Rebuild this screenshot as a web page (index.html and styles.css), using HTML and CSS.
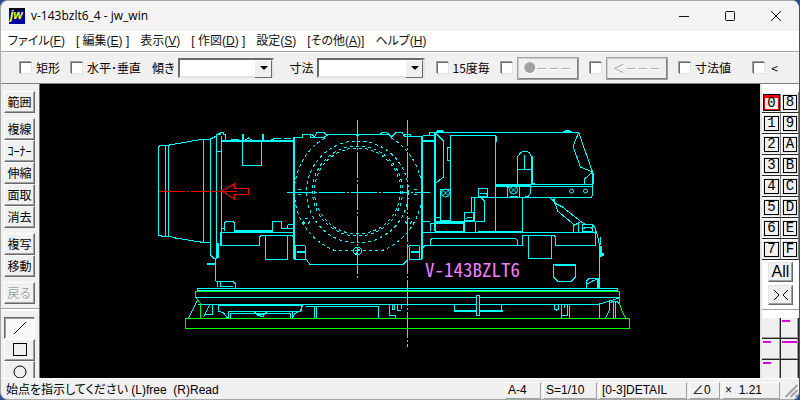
FILE: index.html
```html
<!DOCTYPE html>
<html lang="ja">
<head>
<meta charset="utf-8">
<title>v-143bzlt6_4 - jw_win</title>
<link rel="stylesheet" href="styles.css">
</head>
<body>
<div class="window">
<header class="titlebar">
  <svg class="app-icon" viewBox="0 0 16 16" aria-hidden="true"><rect width="16" height="16" fill="#0000a0"/><path d="M0 0H16V2H0zM6 2h2v2H6zM14 2h2v2h-2z" fill="#000"/><text x="1" y="11" class="app-letters">jw</text></svg>
  <h1 class="title">v-143bzlt6_4 - jw_win</h1>
  <div class="window-buttons">
    <button aria-label="最小化"><svg viewBox="0 0 12 12"><path d="M1 6.500H11"/></svg></button>
    <button aria-label="最大化"><svg viewBox="0 0 12 12"><rect x="1.500" y="1.500" width="9" height="9" rx="1"/></svg></button>
    <button aria-label="閉じる"><svg viewBox="0 0 12 12"><path d="M1 1L11 11M11 1L1 11"/></svg></button>
  </div>
</header>
<nav class="menubar">
  <a href="#">ファイル(<u>F</u>)</a>
  <a href="#">[ 編集(<u>E</u>) ]</a>
  <a href="#">表示(<u>V</u>)</a>
  <a href="#">[ 作図(<u>D</u>) ]</a>
  <a href="#">設定(<u>S</u>)</a>
  <a href="#">[その他(<u>A</u>)]</a>
  <a href="#">ヘルプ(<u>H</u>)</a>
</nav>
<form class="options">
  <label class="check"><input type="checkbox">矩形</label>
  <label class="check"><input type="checkbox">水平･垂直</label>
  <label class="combo">傾き<span class="drop"><select><option></option></select></span></label>
  <label class="combo wide">寸法<span class="drop"><select><option></option></select></span></label>
  <label class="check"><input type="checkbox">15度毎</label>
  <span class="pair"><input type="checkbox" aria-label="端点"><button type="button" disabled>●－－－</button></span>
  <span class="pair"><input type="checkbox" aria-label="矢印"><button type="button" disabled>＜－－－</button></span>
  <label class="check"><input type="checkbox">寸法値</label>
  <label class="check last"><input type="checkbox">&lt;</label>
</form>
<main class="work">
  <aside class="tools">
    <div class="tool-group"><button>範囲</button></div>
    <div class="tool-group"><button>複線</button><button>ｺｰﾅｰ</button><button>伸縮</button><button>面取</button><button>消去</button></div>
    <div class="tool-group"><button>複写</button><button>移動</button></div>
    <div class="tool-group"><button disabled>戻る</button></div>
    <div class="tool-group shapes">
      <button class="pressed" aria-label="線"><svg viewBox="0 0 16 16"><path d="M2 14L14 2"/></svg></button>
      <button aria-label="矩形"><svg viewBox="0 0 16 16"><rect x="1.500" y="1.500" width="13" height="12"/></svg></button>
      <button aria-label="円"><svg viewBox="0 0 16 16"><circle cx="8" cy="8" r="6"/></svg></button>
    </div>
  </aside>
  <svg class="drawing" viewBox="40 85 720 293" role="img" aria-label="V-143BZLT6">
    <g transform="translate(.5 .5)" class="line">
      <!-- lens barrel -->
      <path d="M158 235V147L160 145H169L175 144L203 139H210L216 136M158 235L161 236H168L175 238L200 242H210M165 145V236M168 145V236M203 139V242M210 139V255L213 258H216M216 136V258M221 136V232M216 151H221M216 136V134H220V132H223V134H225V141"/>
      <path class="thick" d="M217 134H220M217 243V258M220 232V246M206 264H215M221 141H292M242 134V141M262 134V141M233 231H272"/>
      <path d="M215 258V281M242 141V165H261V141M242 140H262M229 140H231L233 139H238M245 140L248 138L251 140M271 140L275 138H280M283 138H290M221 232H292"/>
      <path d="M221 228H224M224 231V223L226 221H232L234 223V231M272 231V222L273 221H280L281 222V228H292M286 229L288 224H292M219 245H259V237L261 235H291L293 237M265 236V259H287V236"/>
      <!-- centre body -->
      <path class="thick" d="M293 137V259M421 137V259M296 252H305M410 252H419M422 141H434M434 132V231"/>
      <path d="M293 137H302V134H310V137H314L316 133L318 132H323L325 134H348M311 134L314 137H324L327 135M348 134H388L391 137L395 133L397 132H401L404 136H422M404 136V134H410V137M380 134L382 132H385L388 134M354 134L357 136L360 134"/>
      <path d="M293 259H305M295 259V246L297 245H304L305 247V258L309 264H403L407 260V247L410 245H418L419 247V259H409V247M409 259H421"/>
      <path class="dash" d="M324 138A63 63 0 0 0 333 250H383A63 63 0 0 0 391 138"/>
      <circle class="dash" cx="357" cy="192" r="51"/><circle class="dash" cx="357" cy="191" r="45"/><circle class="dash" cx="357" cy="191" r="43"/>
      <circle cx="357" cy="251" r="4"/><circle class="dash" cx="306" cy="221" r="3"/><circle class="dash" cx="408" cy="221" r="3"/>
      <path d="M355 254L359 249M354 250H357M297 189H300M297 194H300M413 189H416M413 194H416"/>
      <path class="chain" d="M357 120V279M407 120V347M286 192H429"/>
      <path d="M422 135H434M429 135V132H433M422 221H429M430 223V231M429 223H434M421 232H595"/>
      <!-- prism housing -->
      <path d="M434 132H578L592 172V184M434 132L443 141V177L434 184M435 131H443M562 131H571M450 221V135H495V197M450 147H447V160H450M578 133L573 145V148L580 167L592 172L584 179V184M495 184H592V195L591 197H474M495 186H592M495 197V232H474"/>
      <path class="thick" d="M436 131H442M564 131H569M495 136V142M592 173V184M495 185H530"/>
      <path d="M517 184V157L520 153L523 151H526L529 153L531 157V184M524 155V169M517 169H531M532 156V183L534 184M507 197V188L509 186M519 186V197M530 186V193L528 196L525 197"/>
      <path d="M440 221V190L441 189H450M509 196H517M478 188H487V196H478ZM480 194L481 193H485L487 195M471 212V197H480L484 201V221H475M474 197V222M464 212H473V221H464ZM466 219L467 217H471M434 217H440V220H450M434 223H463V231H434M464 222V232M475 222V232M435 221H464"/>
      <g class="bolt"><circle cx="445" cy="193" r="4"/><circle cx="513" cy="190" r="4"/><path d="M442 190L448 196M448 190L442 196M510 187L516 193M516 187L510 193"/><circle cx="571" cy="191" r="2"/><circle cx="585" cy="191" r="2"/></g>
      <path class="thick" d="M464 221H474M463 223V231M477 232H522M434 222H463"/>
      <path d="M522 197V232M549 197L555 204L557 211L574 225M552 199L556 204L562 207L581 222M554 198V202M573 232V226L579 222M578 222V232M582 224H592V231H582ZM583 229L585 227H590L592 229M581 222L584 224H592L595 229V245M595 229L597 236L599 245V288M600 237V245"/>
      <path class="thick" d="M600 246V257M602 253V256"/>
      <path d="M422 248L425 245H522V236L524 235H553L555 237V245H595M430 245V240L432 238H515L517 241V245M528 235V258H551V235M553 264H575V277L571 281H557L553 277ZM554 265H574M586 288V281L589 278H598V288M587 284L592 281L597 279M597 278V288"/>
      <!-- base rails -->
      <path d="M215 281H232L235 284V288M217 281V287M220 281V286M219 286H232M197 290V288H617V290H196M195 297H619M197 304H599V318M197 300L188 318M209 305L203 317M204 314H212V304M218 304V311L223 313L227 318M228 311V318M230 313V318M228 311H300L302 305L305 304M301 310L294 314L292 318M230 313H290V318M292 311V318M254 312L257 315L260 316H263L266 312M257 314H264M305 306H378V318M314 306V318M316 306V318M389 304V315H395V318M392 304V309H394V304M397 304V310H400M401 304V309"/>
      <path class="thick" d="M218 305H302M454 311H502"/>
      <path d="M454 304V312M501 304V312M554 304V309L556 310L558 309V304M561 304V318M561 315H567V304M564 304V308M569 304V318M599 304L609 301L619 298M605 318L609 310V303L613 301H617M613 302V318M615 302V318M616 301L619 304L622 312"/>
    </g>
    <g transform="translate(.5 .5)" class="line green"><path d="M185 318H629V328H185ZM195 297V291H619V304L622 312L625 318M195 297L200 304V318"/></g>
    <g transform="translate(.5 .5)" class="line"><rect x="476" y="295" width="3" height="20" fill="#000"/></g>
    <g transform="translate(.5 .5)" class="line red"><path d="M221 191L234 184V188H248V194H234V199Z"/><path class="chain" d="M158 191H236"/></g>
    <text x="425" y="277" class="model">V-143BZLT6</text>
  </svg>
  <aside class="layers">
    <div class="layer-grid">
      <button class="current">0</button><button>8</button><button>1</button><button>9</button><button>2</button><button>A</button><button>3</button><button>B</button><button>4</button><button>C</button><button>5</button><button>D</button><button>6</button><button>E</button><button>7</button><button>F</button>
    </div>
    <div class="layer-actions">
      <button>All</button>
      <button aria-label="全レイヤ切替"><svg viewBox="0 0 16 12"><path d="M1 1L6 6L1 11M15 1L10 6L15 11"/></svg></button>
    </div>
    <div class="group-grid"><button aria-label="グループ 0"></button><button class="used" aria-label="グループ 8"></button><button class="used" aria-label="グループ 1"></button><button class="used full" aria-label="グループ 9"></button><button class="used" aria-label="グループ 2"></button><button aria-label="グループ A"></button></div>
  </aside>
</main>
<footer class="status">
  <span class="message">始点を指示してください (L)free&nbsp; (R)Read</span>
  <span class="panel paper">A-4</span>
  <span class="panel scale">S=1/10</span>
  <span class="panel layer">[0-3]DETAIL</span>
  <span class="panel angle">∠0</span>
  <span class="panel zoom">×&nbsp; 1.21</span>
  <svg class="grip" viewBox="0 0 16 16" aria-hidden="true"><path d="M3 15L15 3M8 15L15 8M13 15L15 13"/></svg>
</footer>
</div>
</body>
</html>
```
FILE: styles.css
```css
* { box-sizing: border-box; }
body { margin: 0; background: #2b4c92; }
button, input, select { font: inherit; color: inherit; margin: 0; padding: 0; }
.window {
  height: 100vh;
  display: flex;
  flex-direction: column;
  overflow: hidden;
  background: #f0f0f0;
  border: solid #a8a8a8;
  border-width: 1px 0 1px 1px;
  border-right: 1px solid #35518f;
  border-radius: 8px;
  color: #000;
  font: 12px/16px "Liberation Sans", "Noto Sans CJK JP", sans-serif;
}
.titlebar { display: flex; align-items: center; height: 30px; flex: none; padding-left: 8px; background: #f3f3f3; }
.app-icon { width: 16px; height: 16px; }
.app-letters { font: italic bold 12px "Liberation Sans", sans-serif; fill: #ff0; }
.title { flex: 1; margin: 0 0 0 6px; font: 12px/16px "Open Sans", sans-serif; }
.window-buttons { display: flex; }
.window-buttons button { width: 46px; height: 29px; border: 0; background: none; display: grid; place-items: center; }
.window-buttons svg { width: 12px; height: 12px; fill: none; stroke: #111; }
.menubar { display: flex; flex: none; gap: 11px; height: 21px; padding: 2px 7px; background: #fff; border-bottom: 1px solid #a0a0a0; white-space: nowrap; font-feature-settings: "palt"; }
.menubar a { color: #111; text-decoration: none; }
.options { display: flex; flex: none; align-items: center; height: 32px; padding-left: 19px; border-top: 1px solid #fff; border-bottom: 1px solid #808080; white-space: nowrap; font-family: "Noto Sans CJK JP", sans-serif; font-feature-settings: "palt"; }
.check, .combo, .pair { display: flex; align-items: center; flex: none; }
.check { gap: 4px; margin-right: 11px; }
.options input { appearance: none; width: 12px; height: 12px; background: #fff; border: 1px solid; border-color: #696969 #e3e3e3 #e3e3e3 #696969; box-shadow: -1px -1px 0 #a0a0a0; }
.combo { gap: 3px; margin-right: 16px; }
.combo.wide { margin-right: 12px; }
.drop { position: relative; width: 96px; height: 20px; }
.wide .drop { width: 108px; }
.drop select { appearance: none; display: block; width: 100%; height: 20px; background: #fff; border: 2px solid; border-color: #696969 #e3e3e3 #e3e3e3 #696969; border-radius: 0; }
.drop::before { content: ""; position: absolute; right: 2px; top: 2px; width: 16px; height: 16px; background: #f0f0f0; border: 1px solid; border-color: #fff #696969 #696969 #fff; pointer-events: none; }
.drop::after { content: ""; position: absolute; right: 6px; top: 8px; border: 4px solid transparent; border-top-color: #000; border-bottom: 0; pointer-events: none; }
.pair { gap: 4px; margin-right: 11px; }
.pair button { width: 62px; height: 23px; background: #f0f0f0; border: 2px solid; border-color: #d0d0d0 #808080 #808080 #d0d0d0; outline: 1px solid #a0a0a0; outline-offset: -1px; color: #a0a0a0; text-shadow: 1px 1px #fff; font-feature-settings: normal; white-space: nowrap; }
.check.last { margin: 0 21px 0 auto; gap: 6px; }
.work { flex: 1; display: flex; min-height: 0; }
.tools { flex: none; width: 39px; padding: 7px 0 0 3px; border-right: 1px solid #696969; overflow: hidden; font-family: "Noto Sans CJK JP", sans-serif; }
.tool-group { display: flex; flex-direction: column; width: 31px; margin-bottom: 5px; }
.tools button { flex: none; height: 22px; background: #f0f0f0; border: 1px solid; border-color: #fff #696969 #696969 #fff; box-shadow: inset -1px -1px #a0a0a0; font-size: 12px; line-height: 18px; white-space: nowrap; display: grid; place-items: center; }
.tools button:disabled { color: #a0a0a0; text-shadow: 1px 1px #fff; }
.shapes { position: relative; margin-top: 13px; }
.shapes::before { content: ""; position: absolute; left: -3px; top: -9px; width: 38px; height: 2px; background: #fff; border-top: 1px solid #a0a0a0; }
.tools .pressed { background: #f8f8f8; border-color: #696969 #fff #fff #696969; box-shadow: inset 1px 1px #a0a0a0; }
.tools svg { width: 16px; height: 16px; fill: none; stroke: #000; }
.drawing { flex: 1; min-width: 0; min-height: 0; height: 100%; background: #000; display: block; }
.line { fill: none; stroke: #0ff; shape-rendering: crispEdges; }
.thick { stroke-width: 2; }
.bolt { shape-rendering: auto; }
.dash { stroke-dasharray: 3 3; }
.chain { stroke-dasharray: 26 2 2 2; }
.green { stroke: #0f0; }
.red { stroke: #f00; }
.model { font: 19px "Noto Sans CJK JP", sans-serif; font-feature-settings: "hwid"; fill: #f080ff; }
.layers { flex: none; width: 39px; padding-top: 8px; background: #fff; border-left: 2px solid #e3e3e3; overflow: hidden; }
.layer-grid { display: grid; grid-template-columns: 19px 18px; grid-auto-rows: 21px; font: 14px/14px "Liberation Mono", monospace; }
.layer-grid button { background: #f0f0f0; border: 1px solid #000; margin: 3px 2px; outline: 1px solid #e3e3e3; position: relative; line-height: 13px; }
.layer-grid button::after { content: ""; position: absolute; inset: -4px -3px; border: solid #808080; border-width: 0 1px 1px 0; border-bottom-color: #222; }
.layer-grid .current { border-color: #f00; border-top-width: 3px; line-height: 11px; outline-color: #000; }
.layer-actions { display: flex; flex-direction: column; align-items: center; gap: 3px; padding: 2px 0 4px; border-bottom: 1px solid #a0a0a0; }
.layer-actions button { width: 25px; height: 20px; background: #f0f0f0; border: 1px solid; border-color: #e3e3e3 #696969 #696969 #e3e3e3; box-shadow: inset -1px -1px #a0a0a0; font-size: 16px; line-height: 16px; display: grid; place-items: center; }
.layer-actions svg { width: 16px; height: 12px; fill: none; stroke: #000; }
.group-grid { display: grid; grid-template-columns: 19px 18px; grid-auto-rows: 21px; margin-top: 8px; }
.group-grid button { background: #f0f0f0; border: solid #222; border-width: 0 1px 1px 0; box-shadow: inset -1px -1px #a0a0a0; display: flex; padding: 2px 1px; }
.used::before { content: ""; width: 8px; height: 2px; background: #d800d8; }
.full::before { width: 15px; }
.status { display: flex; flex: none; align-items: stretch; height: 21px; padding-top: 3px; border-top: 1px solid #fff; gap: 2px; white-space: nowrap; font-feature-settings: "palt"; }
.message { flex: 1; padding-left: 5px; }
.panel { padding-left: 2px; border: 1px solid; border-color: #fff #a0a0a0 #a0a0a0 #fff; line-height: 15px; }
.paper { width: 36px; }
.scale { width: 54px; }
.layer { width: 88px; }
.angle { width: 31px; }
.zoom { width: 58px; }
.grip { width: 17px; height: 16px; stroke: #a0a0a0; stroke-width: 2; }
```
